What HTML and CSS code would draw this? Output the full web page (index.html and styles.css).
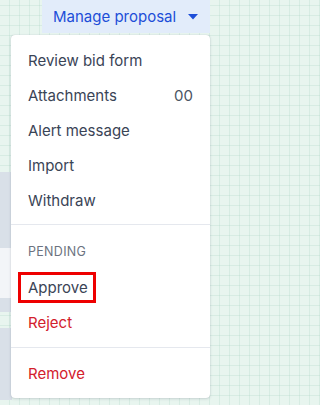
FILE: index.html
```html
<!DOCTYPE html>
<html>
<head>
<meta charset="utf-8">
<link rel="stylesheet" href="styles.css">
</head>
<body>
<div class="page">
  <div class="backdrop">
    <div class="band band-grid band-top"></div>
    <div class="band band-gray b1"></div>
    <div class="band band-light b2"></div>
    <div class="band band-gray b3"></div>
    <div class="band band-grid b4"></div>
    <div class="band band-gray b5"></div>
  </div>
  <div class="header">
    <button class="manage">Manage proposal
      <svg class="caret" width="10" height="6" viewBox="0 0 10 6"><path d="M0 0H10L5 5.5Z" fill="#1d4ed8"/></svg>
    </button>
  </div>
  <div class="menu">
    <div class="group g1">
      <div class="item">Review bid form</div>
      <div class="item"><span>Attachments</span><span class="count">00</span></div>
      <div class="item">Alert message</div>
      <div class="item">Import</div>
      <div class="item">Withdraw</div>
    </div>
    <div class="group g2">
      <div class="heading">PENDING</div>
      <div class="item"><span class="mark">Approve</span></div>
      <div class="item danger">Reject</div>
    </div>
    <div class="group g3">
      <div class="item danger">Remove</div>
    </div>
  </div>
</div>
</body>
</html>
```
FILE: styles.css
```css
html, body {
  margin: 0;
  padding: 0;
}
body {
  width: 220px;
  height: 405px;
  overflow: hidden;
  font-family: Inter, "Noto Sans", sans-serif;
  background-color: #e8f5ef;
  background-image:
    repeating-linear-gradient(90deg, transparent 0 9px, rgba(170, 212, 195, 0.28) 9px 10px),
    repeating-linear-gradient(0deg, transparent 0 9px, rgba(170, 212, 195, 0.28) 9px 10px);
}
.page {
  position: relative;
  width: 220px;
  height: 405px;
}
.backdrop {
  position: absolute;
  left: 0;
  top: 0;
  width: 12px;
  display: flex;
  flex-direction: column;
}
.band-top { height: 172px; }
.band-gray { background: #d9e0e8; }
.band-light { background: #f3f5f8; }
.band-grid { background: transparent; }
.b1 { height: 76px; }
.b2 { height: 50px; }
.b3 { height: 14px; }
.b4 { height: 16px; }
.b5 { height: 72px; }
.header {
  display: flex;
  justify-content: flex-end;
  padding-right: 10px;
}
.manage {
  display: flex;
  align-items: center;
  gap: 12px;
  width: 168px;
  height: 33px;
  padding: 0 0 0 11px;
  border: none;
  background: #e2ecfa;
  color: #1d4ed8;
  font-family: inherit;
  font-size: 15px;
  font-weight: 400;
  line-height: 20px;
}
.caret { margin-top: 1px; }
.menu {
  position: absolute;
  left: 11px;
  top: 35px;
  width: 199px;
  background: #fff;
  border-radius: 4px;
  box-shadow: 0 1px 3px rgba(60, 70, 90, 0.18), 0 0 1px rgba(60, 70, 90, 0.25);
}
.group {
  padding: 7px 0;
  border-top: 1px solid #e5e8ee;
}
.group.g1 { border-top: none; padding: 8px 0 6px; }
.group.g3 { padding: 8px 0 7px; }
.item {
  height: 35px;
  display: flex;
  align-items: center;
  justify-content: space-between;
  padding: 0 17px;
  font-size: 15px;
  color: #3a4456;
}
.count { color: #4b5563; }
.heading {
  height: 38px;
  display: flex;
  align-items: center;
  padding: 0 17px;
  font-size: 12.5px;
  letter-spacing: 0.3px;
  color: #6b7280;
}
.danger { color: #d3202c; }
.mark {
  display: inline-block;
  margin-left: -10px;
  padding: 3px 5px 3px 7px;
  line-height: 19px;
  border: 3px solid #ee0000;
}
```
